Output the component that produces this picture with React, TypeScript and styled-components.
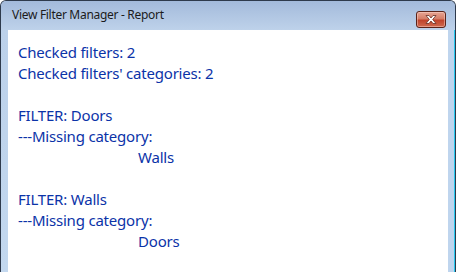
import React from "react";
import styled, { createGlobalStyle } from "styled-components";

const Global = createGlobalStyle`
  html, body { margin: 0; padding: 0; background: #ffffff; }
  body { width: 456px; height: 272px; overflow: hidden; }
`;

const Window = styled.div`
  box-sizing: border-box;
  width: 456px;
  height: 272px;
  display: flex;
  flex-direction: column;
  background: linear-gradient(#a9bfdc 0px, #bcd1ea 30px, #c3d8ef 100%);
  border: 1px solid #2e3a4c;
  border-bottom: none;
  border-top-left-radius: 6px;
  border-top-right-radius: 6px;
  overflow: hidden;
`;

const TitleBar = styled.div`
  height: 29px;
  flex: none;
  display: flex;
  align-items: center;
  justify-content: space-between;
  padding: 0 9px 0 11px;
  background: linear-gradient(#a3badb, #bed2ea);
`;

const Title = styled.span`
  font-family: "Noto Sans", "Open Sans", sans-serif;
  font-size: 12px;
  letter-spacing: -0.3px;
  color: #1b1b1b;
  position: relative;
  top: -1px;
`;

const CloseButton = styled.div`
  box-sizing: border-box;
  width: 30px;
  height: 17px;
  margin-top: 7px;
  border: 1px solid #5b2319;
  border-radius: 3px;
  background: linear-gradient(#e7a594 0%, #d57e68 45%, #c0432b 55%, #cf6a4f 100%);
  box-shadow: inset 0 0 0 1px rgba(255, 220, 210, 0.45);
  display: flex;
  align-items: center;
  justify-content: center;
`;

const Body = styled.div`
  flex: 1;
  display: flex;
  padding: 0 0 0 7px;
`;

const Content = styled.div`
  flex: 1;
  background: #ffffff;
  padding: 12px 0 0 10px;
  font-family: "Noto Sans", "Open Sans", sans-serif;
  font-size: 15px;
  letter-spacing: -0.2px;
  line-height: 21px;
  color: #0b33a8;
`;

const RightFrame = styled.div`
  width: 6px;
  flex: none;
  background: #bfd5ee;
  border-right: 1px solid #27c9ef;
`;

const Line = styled.div<{ $indent?: boolean }>`
  height: 21px;
  white-space: pre;
  padding-left: ${(p) => (p.$indent ? "120px" : "0")};
`;

const lines: { text: string; indent?: boolean }[] = [
  { text: "Checked filters: 2" },
  { text: "Checked filters' categories: 2" },
  { text: "" },
  { text: "FILTER: Doors" },
  { text: "---Missing category:" },
  { text: "Walls", indent: true },
  { text: "" },
  { text: "FILTER: Walls" },
  { text: "---Missing category:" },
  { text: "Doors", indent: true },
];

export default function App() {
  return (
    <>
      <Global />
      <Window>
        <TitleBar>
          <Title>View Filter Manager - Report</Title>
          <CloseButton>
            <svg width="14" height="11" viewBox="0 0 14 11">
              <path
                d="M2 1.5 L5 1.5 L7 4 L9 1.5 L12 1.5 L8.7 5.5 L12 9.5 L9 9.5 L7 7 L5 9.5 L2 9.5 L5.3 5.5 Z"
                fill="#ffffff"
                stroke="#6a3024"
                strokeWidth="0.8"
                strokeLinejoin="round"
              />
            </svg>
          </CloseButton>
        </TitleBar>
        <Body>
          <Content>
            {lines.map((l, i) => (
              <Line key={i} $indent={l.indent}>
                {l.text}
              </Line>
            ))}
          </Content>
          <RightFrame />
        </Body>
      </Window>
    </>
  );
}
